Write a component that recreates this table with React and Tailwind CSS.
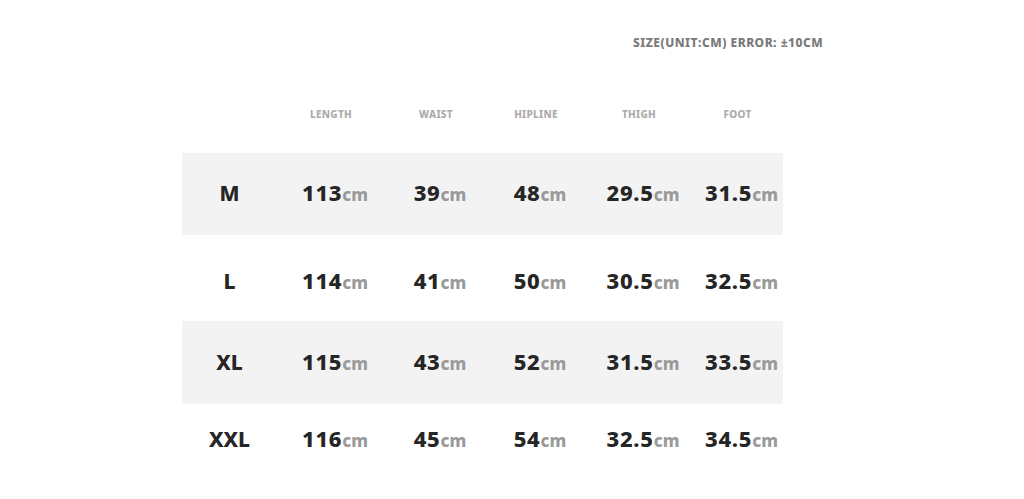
import React from "react";

const cols = ["LENGTH", "WAIST", "HIPLINE", "THIGH", "FOOT"];
const rows = [
  { size: "M", vals: ["113", "39", "48", "29.5", "31.5"], cls: "h-[82px] bg-[#f4f3f4] pt-[1px]" },
  { size: "L", vals: ["114", "41", "50", "30.5", "32.5"], cls: "h-[86px] bg-white pt-[9px]" },
  { size: "XL", vals: ["115", "43", "52", "31.5", "33.5"], cls: "h-[83px] bg-[#f4f3f4] pt-[2px]" },
  { size: "XXL", vals: ["116", "45", "54", "32.5", "34.5"], cls: "h-[84px] bg-white pb-[10px]" },
];

const grid = "grid grid-cols-[94px_110px_100px_100px_106px_91px]";

export default function App() {
  return (
    <div
      className="w-[1024px] h-[499px] bg-white overflow-hidden"
      style={{ fontFamily: '"Noto Sans", "Open Sans", sans-serif' }}
    >
      <div className="h-[85px] pt-[35px] pl-[633px]">
        <div className="text-[12px] font-extrabold text-[#7a7a7a] leading-[16px] tracking-[0.5px]">
          SIZE(UNIT:CM) ERROR: ±10CM
        </div>
      </div>
      <div className="ml-[182px] w-[601px]">
        <div className={`${grid} h-[68px] items-center pb-[10px]`}>
          <div />
          {cols.map((c) => (
            <div key={c} className="text-center text-[10px] font-extrabold text-[#ababab] tracking-[0.3px]">
              {c}
            </div>
          ))}
        </div>
        {rows.map((r) => (
          <div key={r.size} className={`${grid} items-center ${r.cls}`}>
            <div className="text-center text-[21px] font-extrabold text-[#262626] pl-[1px] pb-[2px]">{r.size}</div>
            {r.vals.map((v, i) => (
              <div key={i} className="text-center pl-[8px] pb-[5px] whitespace-nowrap">
                <span className="text-[22px] font-extrabold text-[#262626] tracking-[0.7px]">{v}</span>
                <span className="text-[17px] font-extrabold text-[#9a9a9a]">cm</span>
              </div>
            ))}
          </div>
        ))}
      </div>
    </div>
  );
}
